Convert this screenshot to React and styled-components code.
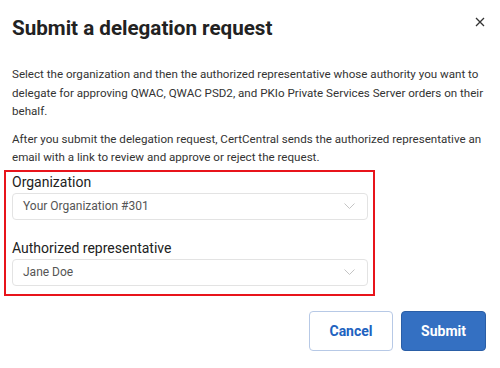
import styled, { createGlobalStyle } from 'styled-components'

const GlobalStyle = createGlobalStyle`
	html, body {
		margin: 0;
		padding: 0;
		background: #fff;
	}
	body {
		font-family: Roboto, 'Liberation Sans', sans-serif;
		color: #333;
	}
`

const Dialog = styled.div`
	width: 500px;
	height: 368px;
	box-sizing: border-box;
	padding: 16px 14px 0 12px;
	display: flex;
	flex-direction: column;
`

const Header = styled.div`
	display: flex;
	align-items: flex-start;
	justify-content: space-between;
`

const Title = styled.h1`
	margin: 0;
	font-size: 20.6px;
	line-height: 24px;
	font-weight: 700;
	color: #222;
`

const Close = styled.button`
	border: none;
	background: none;
	padding: 0;
	margin: 0;
	width: 12px;
	height: 12px;
	display: flex;
	align-items: center;
	justify-content: center;
	cursor: pointer;
`

const Text = styled.p`
	margin: ${(props) => (props.first ? '25px' : '9px')} 0 0;
	font-size: 11.6px;
	line-height: 18.5px;
	color: #333;
`

const Highlight = styled.div`
	margin: 3px 0 0 -8px;
	width: 371px;
	box-sizing: border-box;
	border: 2px solid #e8141b;
	padding: 2px 5px 8px 6px;
	display: flex;
	flex-direction: column;
`

const Label = styled.label`
	display: block;
	font-size: 14px;
	line-height: 17px;
	color: #222;
	margin-top: ${(props) => (props.spaced ? '20px' : '0')};
`

const Select = styled.div`
	margin-top: 2px;
	height: 27px;
	box-sizing: border-box;
	border: 1px solid #e3e3e3;
	border-radius: 4px;
	padding: 0 12px 0 10px;
	display: flex;
	align-items: center;
	justify-content: space-between;
	font-size: 12px;
	color: #555;
`

const Footer = styled.div`
	margin-top: 15px;
	display: flex;
	justify-content: flex-end;
	gap: 8px;
`

const Button = styled.button`
	height: 40px;
	box-sizing: border-box;
	border-radius: 4px;
	font-family: Roboto, 'Liberation Sans', sans-serif;
	font-size: 14px;
	font-weight: 700;
	cursor: pointer;
	width: ${(props) => (props.primary ? '85px' : '84px')};
	border: 1px solid ${(props) => (props.primary ? '#2a5ea6' : '#b7c9e6')};
	background: ${(props) => (props.primary ? '#3470c2' : '#fff')};
	color: ${(props) => (props.primary ? '#fff' : '#2162c0')};
`

function Chevron() {
	return (
		<svg width="11" height="6" viewBox="0 0 11 6">
			<path d="M0.5 0.5 L5.5 5.5 L10.5 0.5" fill="none" stroke="#c4c4c4" strokeWidth="1" />
		</svg>
	)
}

export default function App() {
	return (
		<>
			<GlobalStyle />
			<Dialog>
				<Header>
					<Title>Submit a delegation request</Title>
					<Close aria-label="Close">
						<svg width="10" height="10" viewBox="0 0 10 10">
							<path d="M1 1 L9 9 M9 1 L1 9" stroke="#333" strokeWidth="1.3" />
						</svg>
					</Close>
				</Header>
				<Text first>
					Select the organization and then the authorized representative whose authority you want to
					delegate for approving QWAC, QWAC PSD2, and PKIo Private Services Server orders on their
					behalf.
				</Text>
				<Text>
					After you submit the delegation request, CertCentral sends the authorized representative an
					email with a link to review and approve or reject the request.
				</Text>
				<Highlight>
					<Label>Organization</Label>
					<Select>
						<span>Your Organization #301</span>
						<Chevron />
					</Select>
					<Label spaced>Authorized representative</Label>
					<Select>
						<span>Jane Doe</span>
						<Chevron />
					</Select>
				</Highlight>
				<Footer>
					<Button>Cancel</Button>
					<Button primary>Submit</Button>
				</Footer>
			</Dialog>
		</>
	)
}
